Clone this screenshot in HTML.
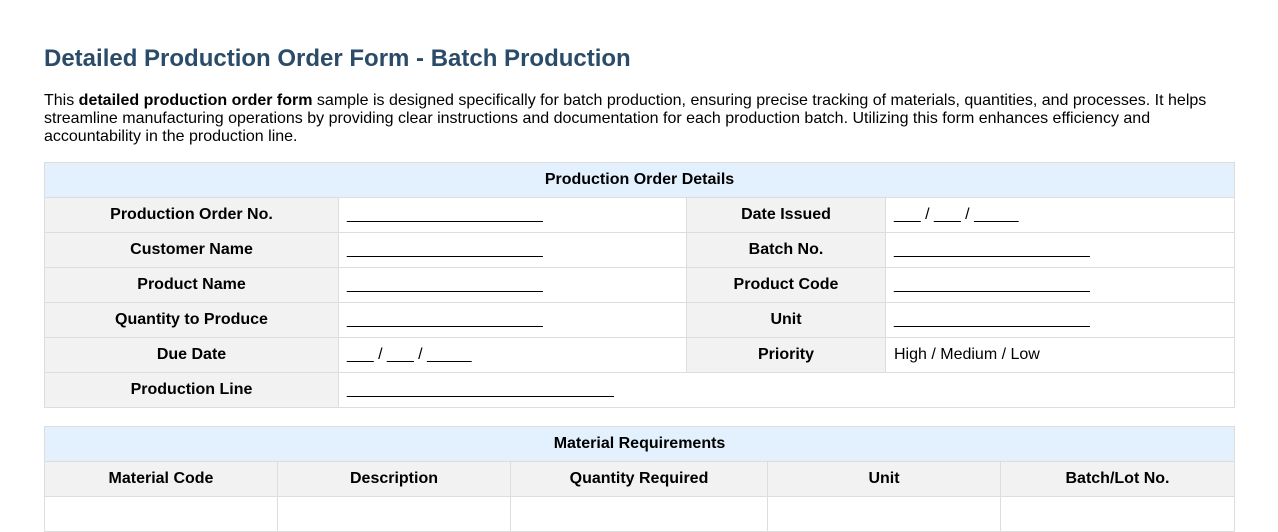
<!DOCTYPE html>
<html><head><style>
html,body{margin:0;background:#fff;font-family:"Liberation Sans",Arial,sans-serif;color:#000;height:501px;overflow:hidden}
h1{font-size:24px;color:#2b4c69;margin:0;position:absolute;top:45px;left:44px;font-weight:bold}
p{position:absolute;top:92px;left:44px;width:1190px;margin:0;font-size:16px;line-height:18px}
table{border-collapse:collapse;position:absolute;left:44px;width:1190px;table-layout:fixed;font-size:16px}
td,th{border:1px solid #ddd;height:34px;padding:0 8px;box-sizing:border-box}
th{background:#e3f0fd;font-weight:bold}
td.l{background:#f2f2f2;font-weight:bold;text-align:center}
th.h{background:#f2f2f2}
</style></head><body>
<h1>Detailed Production Order Form - Batch Production</h1>
<p>This <b>detailed production order form</b> sample is designed specifically for batch production, ensuring precise tracking of materials, quantities, and processes. It helps streamline manufacturing operations by providing clear instructions and documentation for each production batch. Utilizing this form enhances efficiency and accountability in the production line.</p>
<table style="top:162px">
<colgroup><col style="width:294px"><col style="width:348px"><col style="width:199px"><col style="width:349px"></colgroup>
<tr><th colspan="4" style="height:35px">Production Order Details</th></tr>
<tr style="height:35px"><td class="l">Production Order No.</td><td>______________________</td><td class="l">Date Issued</td><td>___ / ___ / _____</td></tr>
<tr style="height:35px"><td class="l">Customer Name</td><td>______________________</td><td class="l">Batch No.</td><td>______________________</td></tr>
<tr style="height:35px"><td class="l">Product Name</td><td>______________________</td><td class="l">Product Code</td><td>______________________</td></tr>
<tr style="height:35px"><td class="l">Quantity to Produce</td><td>______________________</td><td class="l">Unit</td><td>______________________</td></tr>
<tr style="height:35px"><td class="l">Due Date</td><td>___ / ___ / _____</td><td class="l">Priority</td><td>High / Medium / Low</td></tr>
<tr style="height:35px"><td class="l">Production Line</td><td colspan="3">______________________________</td></tr>
</table>
<table style="top:426px">
<colgroup><col style="width:233px"><col style="width:233px"><col style="width:257px"><col style="width:233px"><col style="width:234px"></colgroup>
<tr><th colspan="5" style="height:35px">Material Requirements</th></tr>
<tr style="height:35px"><th class="h">Material Code</th><th class="h">Description</th><th class="h">Quantity Required</th><th class="h">Unit</th><th class="h">Batch/Lot No.</th></tr>
<tr style="height:35px"><td></td><td></td><td></td><td></td><td></td></tr>
</table>
</body></html>
